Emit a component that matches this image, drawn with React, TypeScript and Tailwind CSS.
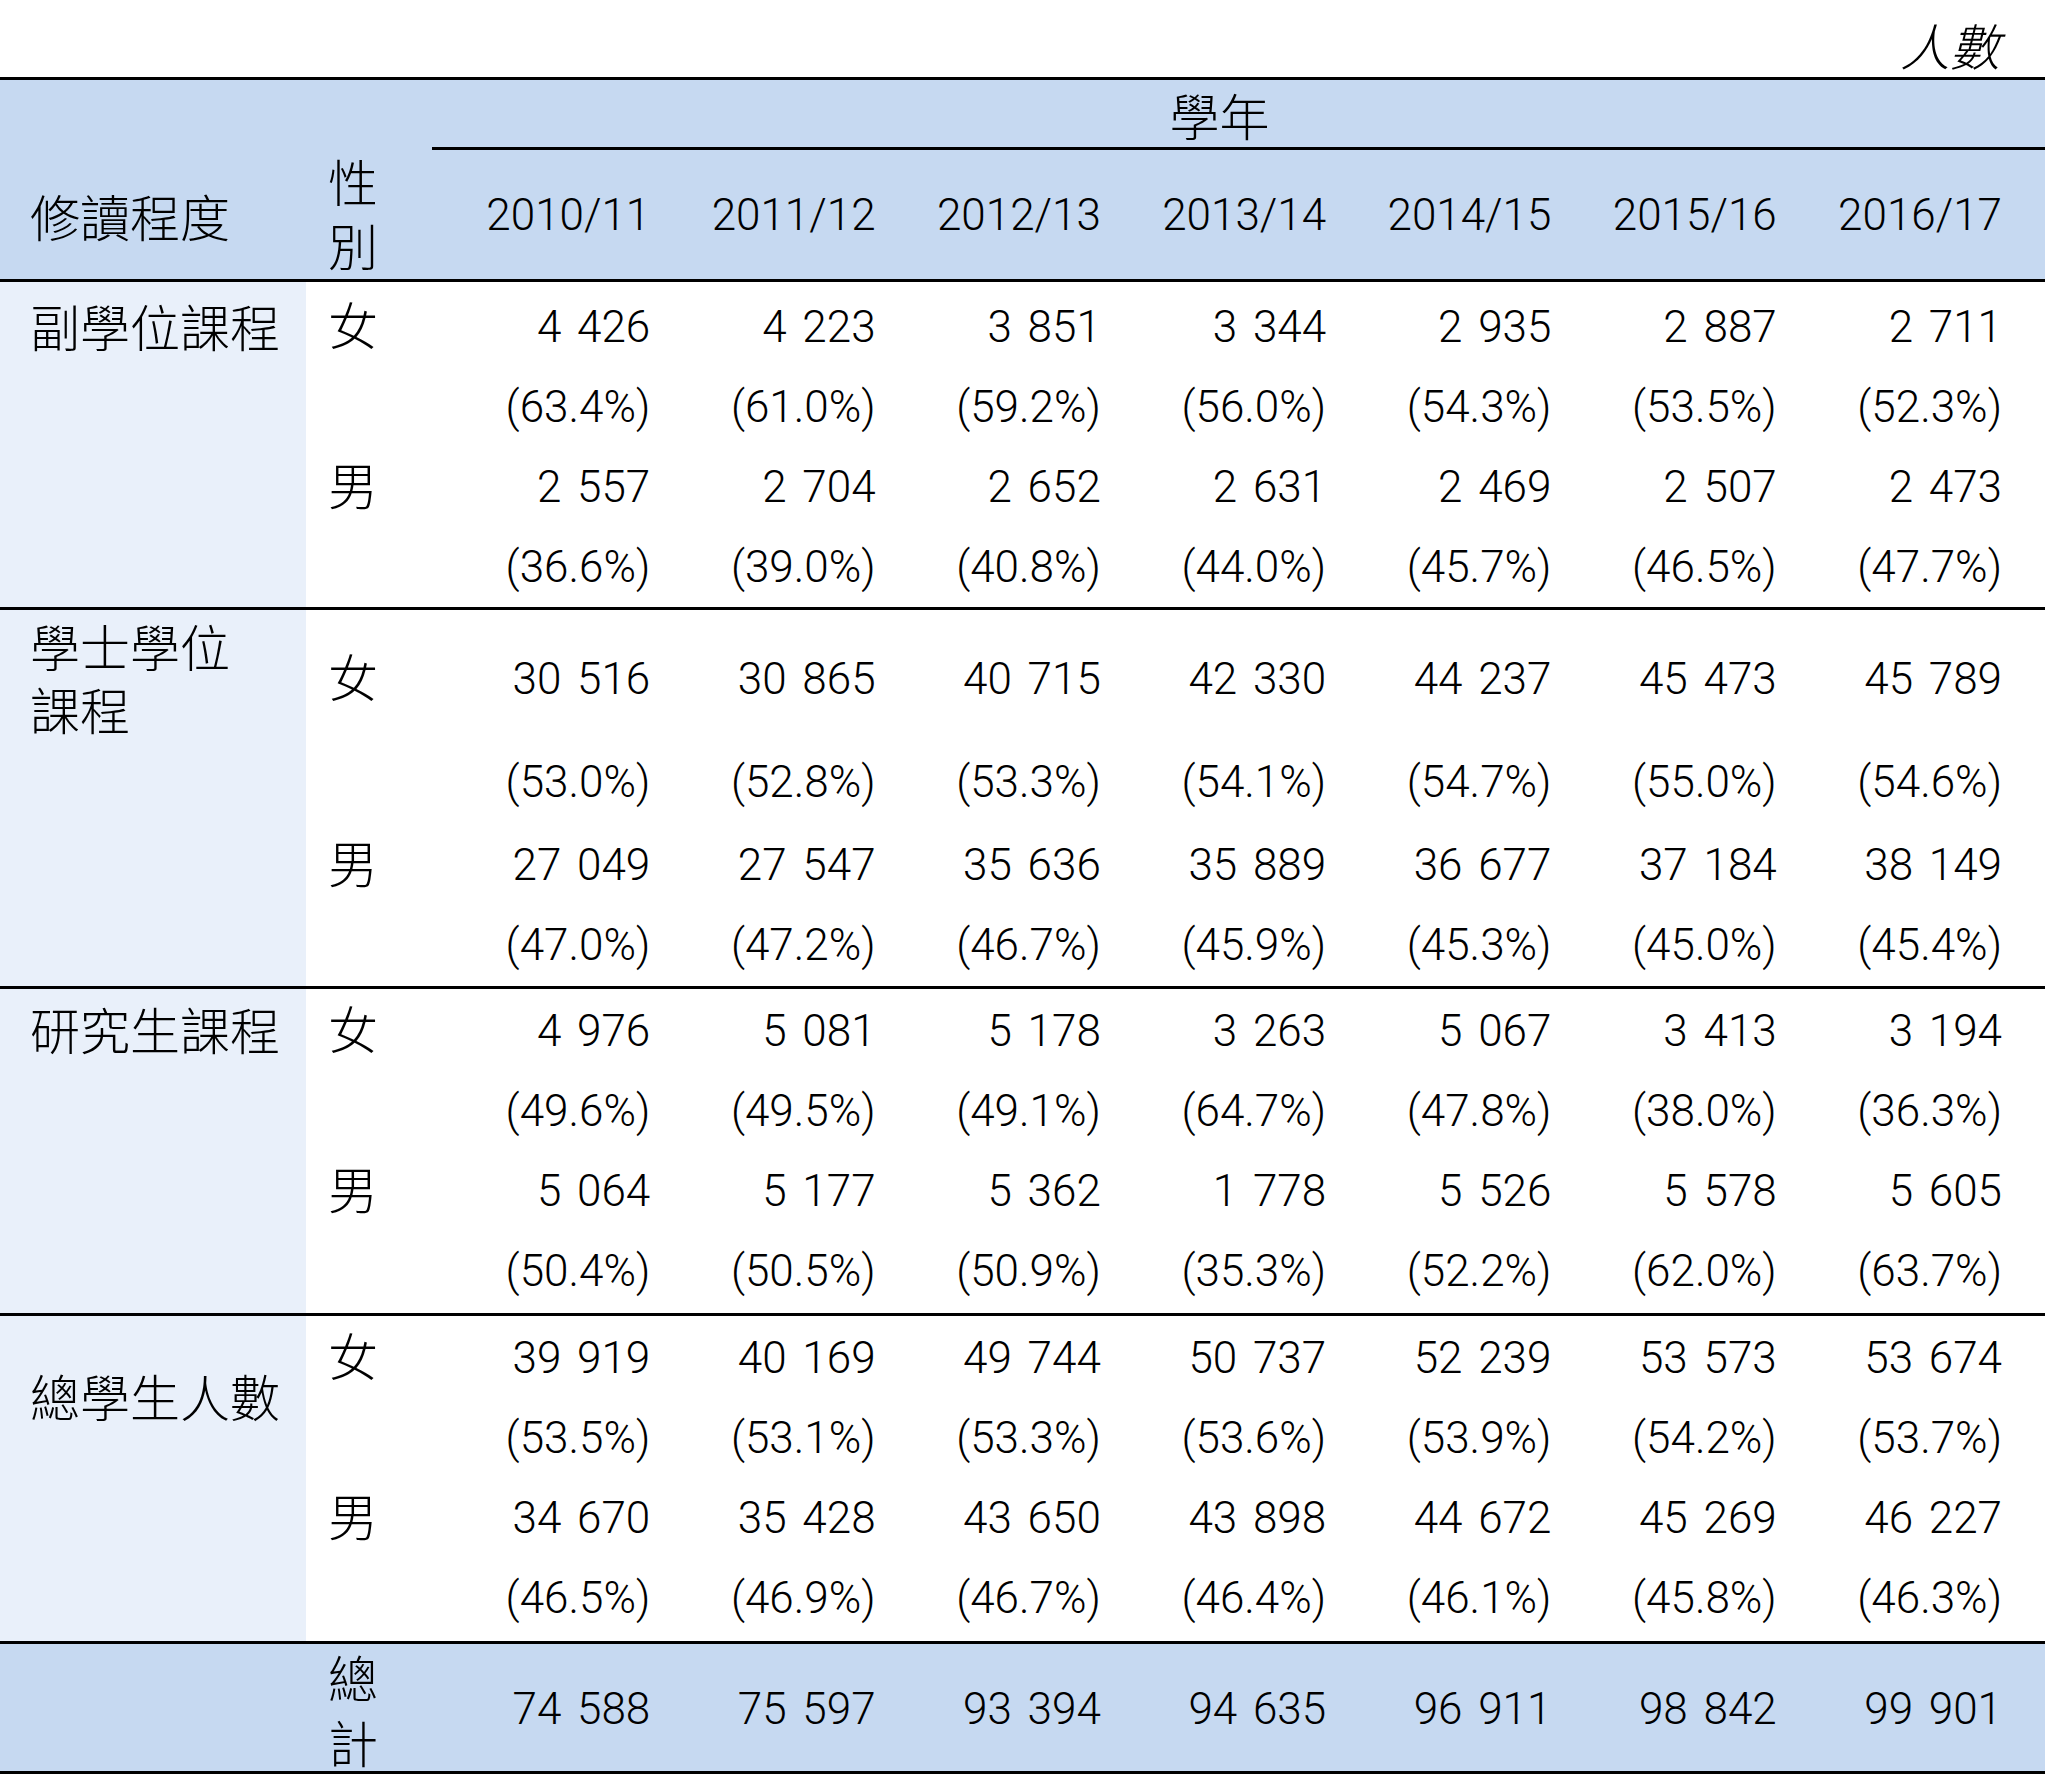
import React from "react";

const years = ["2010/11", "2011/12", "2012/13", "2013/14", "2014/15", "2015/16", "2016/17"];

type Row = { g: string; v: string[]; h: string };

const groups: { label: React.ReactNode; pad: string; labelPad: string; rows: Row[] }[] = [
  {
    label: "副學位課程",
    pad: "pt-[5px]",
    labelPad: "pt-[12px]",
    rows: [
      { g: "女", h: "h-[80px]", v: ["4 426", "4 223", "3 851", "3 344", "2 935", "2 887", "2 711"] },
      { g: "", h: "h-[80px]", v: ["(63.4%)", "(61.0%)", "(59.2%)", "(56.0%)", "(54.3%)", "(53.5%)", "(52.3%)"] },
      { g: "男", h: "h-[80px]", v: ["2 557", "2 704", "2 652", "2 631", "2 469", "2 507", "2 473"] },
      { g: "", h: "h-[80px]", v: ["(36.6%)", "(39.0%)", "(40.8%)", "(44.0%)", "(45.7%)", "(46.5%)", "(47.7%)"] },
    ],
  },
  {
    label: (
      <>
        學士學位
        <br />
        課程
      </>
    ),
    pad: "pt-[8px] pb-[1px]",
    labelPad: "pt-[4px]",
    rows: [
      { g: "女", h: "h-[121px]", v: ["30 516", "30 865", "40 715", "42 330", "44 237", "45 473", "45 789"] },
      { g: "", h: "h-[86px]", v: ["(53.0%)", "(52.8%)", "(53.3%)", "(54.1%)", "(54.7%)", "(55.0%)", "(54.6%)"] },
      { g: "男", h: "h-[80px]", v: ["27 049", "27 547", "35 636", "35 889", "36 677", "37 184", "38 149"] },
      { g: "", h: "h-[80px]", v: ["(47.0%)", "(47.2%)", "(46.7%)", "(45.9%)", "(45.3%)", "(45.0%)", "(45.4%)"] },
    ],
  },
  {
    label: "研究生課程",
    pad: "pt-[2px] pb-[2px]",
    labelPad: "pt-[8px]",
    rows: [
      { g: "女", h: "h-[80px]", v: ["4 976", "5 081", "5 178", "3 263", "5 067", "3 413", "3 194"] },
      { g: "", h: "h-[80px]", v: ["(49.6%)", "(49.5%)", "(49.1%)", "(64.7%)", "(47.8%)", "(38.0%)", "(36.3%)"] },
      { g: "男", h: "h-[80px]", v: ["5 064", "5 177", "5 362", "1 778", "5 526", "5 578", "5 605"] },
      { g: "", h: "h-[80px]", v: ["(50.4%)", "(50.5%)", "(50.9%)", "(35.3%)", "(52.2%)", "(62.0%)", "(63.7%)"] },
    ],
  },
  {
    label: "總學生人數",
    pad: "pt-[2px] pb-[3px]",
    labelPad: "pt-[48px]",
    rows: [
      { g: "女", h: "h-[80px]", v: ["39 919", "40 169", "49 744", "50 737", "52 239", "53 573", "53 674"] },
      { g: "", h: "h-[80px]", v: ["(53.5%)", "(53.1%)", "(53.3%)", "(53.6%)", "(53.9%)", "(54.2%)", "(53.7%)"] },
      { g: "男", h: "h-[80px]", v: ["34 670", "35 428", "43 650", "43 898", "44 672", "45 269", "46 227"] },
      { g: "", h: "h-[80px]", v: ["(46.5%)", "(46.9%)", "(46.7%)", "(46.4%)", "(46.1%)", "(45.8%)", "(46.3%)"] },
    ],
  },
];

const totals = ["74 588", "75 597", "93 394", "94 635", "96 911", "98 842", "99 901"];

const cjk = "font-['Noto_Sans_CJK_TC',sans-serif] font-light text-[50px]";
const num = "font-['Roboto','Noto_Sans_CJK_TC',sans-serif] font-light text-[44px] [word-spacing:5px] leading-none";

export default function App() {
  return (
    <div className="w-[2045px] bg-white text-black">
      {/* unit */}
      <div className="h-[77px] flex items-center justify-end pt-[10px] pr-[45px]">
        <span className={`${cjk} italic leading-none`}>人數</span>
      </div>

      {/* header */}
      <div className="border-y-[3px] border-black bg-[#c6d9f1] grid grid-cols-[306px_126px_36px_repeat(7,minmax(0,1fr))] grid-rows-[70px_129px]">
        <div className="col-start-3 col-span-8 row-start-1 border-b-[3px] border-black flex items-center justify-center pr-[38px]">
          <span className={`${cjk} leading-none`}>學年</span>
        </div>
        <div className={`col-start-1 row-start-2 flex items-center pl-[30px] ${cjk} leading-none`}>修讀程度</div>
        <div className={`col-start-2 row-start-2 flex flex-col justify-center pl-[22px] pb-[6px] ${cjk} leading-[64px]`}>
          <span>性</span>
          <span>別</span>
        </div>
        <div className="col-start-3 row-start-2" />
        {years.map((y) => (
          <div key={y} className={`row-start-2 flex items-center justify-end pr-[43px] ${num}`}>
            {y}
          </div>
        ))}
      </div>

      {/* body groups */}
      {groups.map((grp, gi) => (
        <div key={gi} className="flex border-b-[3px] border-black">
          <div className={`w-[306px] shrink-0 bg-[#e9f0fa] pl-[30px] ${grp.labelPad} ${cjk} leading-[63px]`}>
            {grp.label}
          </div>
          <div className={`flex-1 ${grp.pad}`}>
            {grp.rows.map((r, ri) => (
              <div key={ri} className={`grid grid-cols-[162px_repeat(7,minmax(0,1fr))] items-center ${r.h}`}>
                <div className={`pl-[22px] pb-[8px] ${cjk} leading-none`}>{r.g}</div>
                {r.v.map((x, xi) => (
                  <div key={xi} className={`text-right pr-[43px] ${num}`}>
                    {x}
                  </div>
                ))}
              </div>
            ))}
          </div>
        </div>
      ))}

      {/* grand total */}
      <div className="border-b-[3px] border-black bg-[#c6d9f1] grid grid-cols-[306px_162px_repeat(7,minmax(0,1fr))] h-[130px] items-center">
        <div />
        <div className={`flex flex-col pl-[22px] ${cjk} leading-[65px]`}>
          <span>總</span>
          <span>計</span>
        </div>
        {totals.map((t, i) => (
          <div key={i} className={`text-right pr-[43px] ${num}`}>
            {t}
          </div>
        ))}
      </div>
    </div>
  );
}
